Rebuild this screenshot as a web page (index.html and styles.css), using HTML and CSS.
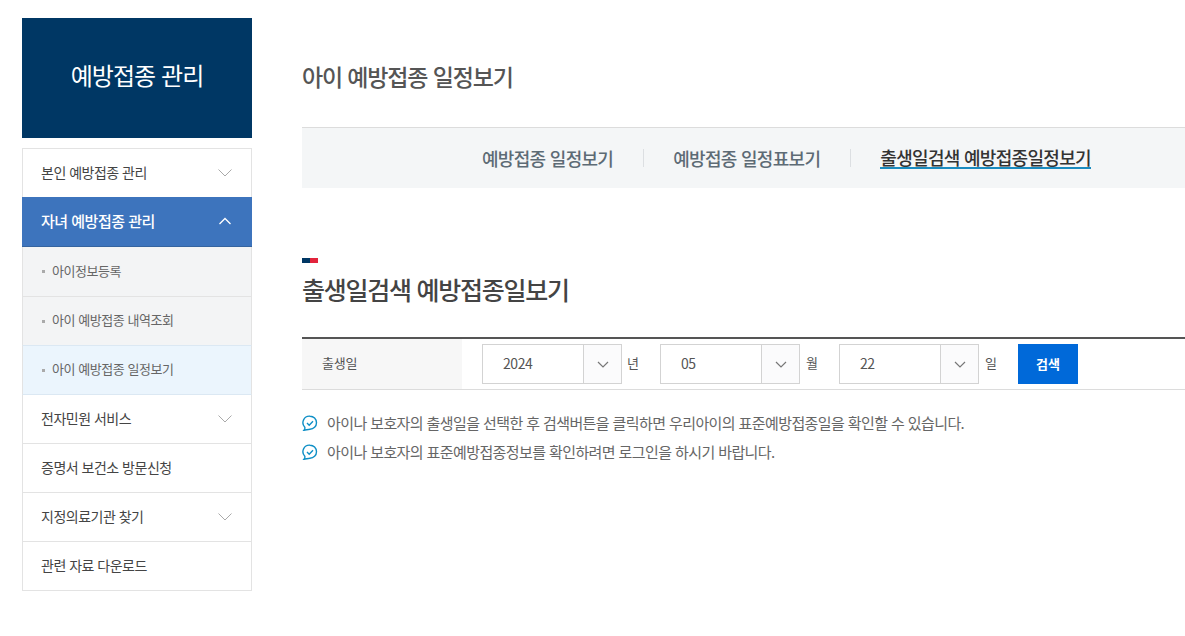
FILE: index.html
```html
<!DOCTYPE html>
<html lang="ko">
<head>
<meta charset="utf-8">
<title>아이 예방접종 일정보기</title>
<link rel="stylesheet" href="styles.css">
</head>
<body>
<div class="page">
  <aside class="side">
    <div class="side-title">예방접종 관리</div>
    <ul class="menu">
      <li class="item">본인 예방접종 관리<svg class="chev" viewBox="0 0 14 8"><path d="M.5.5 7 7 13.5.5"/></svg></li>
      <li class="item active">자녀 예방접종 관리<svg class="chev up" viewBox="0 0 14 8"><path d="M1.500 7 7 1.500 12.500 7"/></svg></li>
      <li class="sub first">아이정보등록</li>
      <li class="sub">아이 예방접종 내역조회</li>
      <li class="sub current">아이 예방접종 일정보기</li>
      <li class="item">전자민원 서비스<svg class="chev" viewBox="0 0 14 8"><path d="M.5.5 7 7 13.5.5"/></svg></li>
      <li class="item">증명서 보건소 방문신청</li>
      <li class="item">지정의료기관 찾기<svg class="chev" viewBox="0 0 14 8"><path d="M.5.5 7 7 13.5.5"/></svg></li>
      <li class="item">관련 자료 다운로드</li>
    </ul>
  </aside>
  <main class="main">
    <h1 class="title">아이 예방접종 일정보기</h1>
    <nav class="tabs">
      <a class="tab">예방접종 일정보기</a>
      <i class="sep"></i>
      <a class="tab">예방접종 일정표보기</a>
      <i class="sep"></i>
      <a class="tab on">출생일검색 예방접종일정보기</a>
    </nav>
    <div class="mark"></div>
    <h2 class="heading">출생일검색 예방접종일보기</h2>
    <div class="form">
      <div class="label">출생일</div>
      <div class="fields">
        <div class="select"><span class="val">2024</span><span class="arrow"><svg viewBox="0 0 12 7"><path d="M1 1l5 5 5-5"/></svg></span></div>
        <span class="unit year">년</span>
        <div class="select"><span class="val">05</span><span class="arrow"><svg viewBox="0 0 12 7"><path d="M1 1l5 5 5-5"/></svg></span></div>
        <span class="unit">월</span>
        <div class="select"><span class="val">22</span><span class="arrow"><svg viewBox="0 0 12 7"><path d="M1 1l5 5 5-5"/></svg></span></div>
        <span class="unit">일</span>
        <button class="btn">검색</button>
      </div>
    </div>
    <ul class="notes">
      <li><svg class="ico" viewBox="0 0 16 16"><path d="M8 1.200a6.500 6.500 0 0 1 0 13c-1.700 0-4 .8-6 1 .8-1 1.100-2 .8-3A6.500 6.500 0 0 1 8 1.200z"/><path d="M5 8l2.200 2.200L11 6.200"/></svg>아이나 보호자의 출생일을 선택한 후 검색버튼을 클릭하면 우리아이의 표준예방접종일을 확인할 수 있습니다.</li>
      <li><svg class="ico" viewBox="0 0 16 16"><path d="M8 1.200a6.500 6.500 0 0 1 0 13c-1.700 0-4 .8-6 1 .8-1 1.100-2 .8-3A6.500 6.500 0 0 1 8 1.200z"/><path d="M5 8l2.200 2.200L11 6.200"/></svg>아이나 보호자의 표준예방접종정보를 확인하려면 로그인을 하시기 바랍니다.</li>
    </ul>
  </main>
</div>
</body>
</html>
```
FILE: styles.css
```css
* { box-sizing: border-box; }
html, body { margin: 0; padding: 0; background: #fff; overflow: hidden; }
body { font-family: "Noto Sans CJK KR", "Noto Sans", sans-serif; color: #555; }
ul { list-style: none; margin: 0; padding: 0; }
h1, h2 { margin: 0; }
.page { display: flex; width: 1185px; height: 636px; padding: 18px 0 0 22px; overflow: hidden; }
.side { width: 230px; flex: none; }
.side-title { height: 120px; padding-bottom: 8px; background: #003764; color: #fff; font-size: 24px; letter-spacing: -.95px; font-weight: 400; display: flex; align-items: center; justify-content: center; }
.menu { margin-top: 10px; border-top: 1px solid #e3e3e3; }
.item { height: 49px; border: solid #e3e3e3; border-width: 0 1px 1px; padding: 0 19px 2px 18px; display: flex; align-items: center; justify-content: space-between; font-size: 14px; letter-spacing: -.5px; color: #444; }
.chev { width: 14px; height: 8px; fill: none; stroke: #aaa; stroke-width: 1; margin-top: 1px; }
.item.active { background: #3d74bd; border: 0; border-bottom: 1px solid #35649f; color: #fff; font-weight: 500; font-size: 15px; height: 50px; margin-top: -1px; padding: 0 20px 2px 19px; }
.chev.up { stroke: #fff; stroke-width: 1.300; }
.sub { height: 49px; background: #f3f4f5; border: solid #e3e3e3; border-width: 0 1px 1px; padding: 0 0 4px 29px; display: flex; align-items: center; font-size: 13px; letter-spacing: -.45px; color: #666; position: relative; }
.sub.first { height: 50px; padding-bottom: 3px; }
.sub::before { content: ""; position: absolute; left: 19px; top: 23px; width: 3px; height: 3px; background: #aaa; }
.sub.current { background: #ebf5fd; border-top: 1px solid #dbe8f3; border-bottom-color: #dbe8f3; margin-top: -1px; height: 50px; }
.main { width: 883px; margin-left: 50px; flex: none; }
.title { font-size: 23px; font-weight: 500; letter-spacing: -1.150px; color: #555; height: 109px; padding-top: 41px; line-height: 34px; }
.tabs { height: 61px; background: #f4f6f7; border-top: 1px solid #dcdcdc; display: flex; align-items: center; padding-left: 180px; }
.tab { font-size: 18px; font-weight: 500; letter-spacing: -.7px; color: #5d6b75; line-height: 22px; }
.tab.on { color: #333; border-bottom: 2px solid #1a8bbf; line-height: 20px; }
.sep { width: 1px; height: 18px; background: #dcdfe2; margin: 0 29.500px; }
.mark { width: 16px; height: 5px; margin-top: 70px; background: linear-gradient(to right, #003764 50%, #e2243c 50%); }
.heading { font-size: 25px; font-weight: 500; letter-spacing: -1.250px; color: #444; line-height: 36px; margin-top: 8px; height: 66px; }
.form { display: flex; height: 53px; border-top: 2px solid #555; border-bottom: 1px solid #dcdcdc; }
.label { width: 160px; background: #f7f7f7; padding-left: 20px; font-size: 13px; letter-spacing: -.2px; line-height: 47px; color: #555; }
.fields { display: flex; align-items: flex-start; padding: 5px 0 0 20px; }
.select { width: 140px; height: 40px; border: 1px solid #d3d3d3; display: flex; }
.val { flex: 1; padding-left: 20px; font-size: 14px; letter-spacing: -.4px; line-height: 36px; color: #555; }
.arrow { width: 38px; border-left: 1px solid #d3d3d3; background: #fbfbfc; display: flex; align-items: center; justify-content: center; }
.arrow svg { width: 12px; height: 7px; fill: none; stroke: #777; stroke-width: 1.200; }
.unit { width: 39px; padding-left: 6px; font-size: 13px; line-height: 38px; color: #555; }
.unit.year { width: 38px; padding-left: 5px; }
.btn { width: 60px; height: 40px; background: #0069d9; color: #fff; border: 0; padding: 0 0 2px; font: 700 13px "Noto Sans CJK KR", sans-serif; }
.notes { margin-top: 18px; }
.notes li { display: flex; align-items: center; height: 29px; font-size: 15px; letter-spacing: -.6px; color: #666; }
.ico { width: 16px; height: 16px; margin-right: 9px; flex: none; fill: none; stroke: #0f8fc6; stroke-width: 1.400; }
```
